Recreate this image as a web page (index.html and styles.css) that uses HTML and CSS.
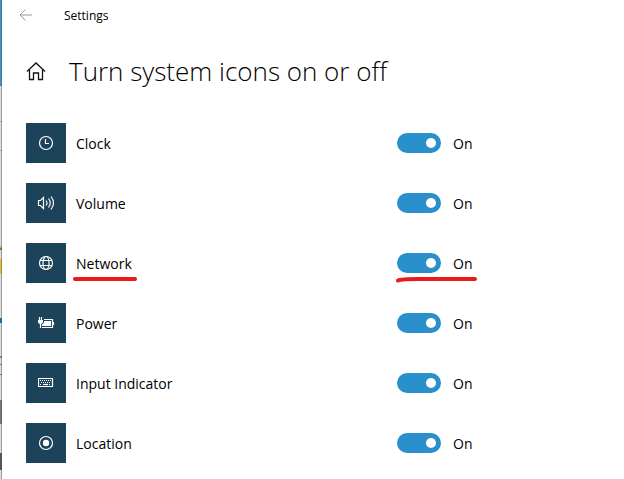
FILE: index.html
```html
<!DOCTYPE html>
<html lang="en">
<head>
    <meta charset="UTF-8">
    <meta name="viewport" content="width=device-width, initial-scale=1.0">
    <title>Settings</title>
    <link rel="stylesheet" href="styles.css">
</head>
<body>
    <div class="desktop-edge"></div>
    <div class="window">
        <header class="titlebar">
            <button class="back" type="button" aria-label="Back">
                <svg width="14" height="12" viewBox="0 0 14 12"><path d="M6.500 .5L1 6l5.500 5.500M1 6h12"/></svg>
            </button>
            <span class="titlebar-text">Settings</span>
        </header>
        <main class="content">
            <div class="heading">
                <button class="home" type="button" aria-label="Home">
                    <svg width="20" height="20" viewBox="0 0 20 20"><path d="M1 10.500L10 2l9 8.500M3.500 9v9.500h4v-6.500h5v6.500h4v-9.500"/></svg>
                </button>
                <h1>Turn system icons on or off</h1>
            </div>
            <ul class="icon-list">
                <li class="row">
                    <span class="tile">
                        <svg width="16" height="16" viewBox="0 0 16 16"><circle cx="8" cy="8" r="6.500"/><path d="M7.500 4v4.500h3.500"/></svg>
                    </span>
                    <label class="name" for="clock">Clock</label>
                    <span class="switch"><input type="checkbox" id="clock" checked><span>On</span></span>
                </li>
                <li class="row">
                    <span class="tile">
                        <svg width="18" height="16" viewBox="0 0 18 16"><path d="M1.500 5.500h2l3-3v11l-3-3h-2zM9 5.500q2 2.500 0 5M11.500 3.500q3.500 4.500 0 9M14 1.500q5 6.500 0 13"/></svg>
                    </span>
                    <label class="name" for="volume">Volume</label>
                    <span class="switch"><input type="checkbox" id="volume" checked><span>On</span></span>
                </li>
                <li class="row">
                    <span class="tile">
                        <svg width="16" height="16" viewBox="0 0 16 16"><circle cx="8" cy="8" r="6.500"/><ellipse cx="8" cy="8" rx="3" ry="6.500"/><path d="M2 5.500h12M2 10.500h12"/></svg>
                    </span>
                    <label class="name marked" for="network">Network
                        <svg class="mark" width="66" height="6" viewBox="0 0 66 6"><path d="M3 3h60"/></svg>
                    </label>
                    <span class="switch marked"><input type="checkbox" id="network" checked><span>On</span>
                        <svg class="mark" width="84" height="8" viewBox="0 0 84 8"><path d="M3 4.500Q6 3 24 3h56"/></svg>
                    </span>
                </li>
                <li class="row">
                    <span class="tile">
                        <svg width="18" height="16" viewBox="0 0 18 16"><path d="M2.500 2v3M4.500 2v3M1 5.500h5M3.500 8v5M7 4.500h8.500v8h-10.500M16.500 7v3"/><path class="solid" d="M1 6h5v1q0 2-2.500 2t-2.500-2zM7 6h7v5h-9v-1.500q2-1 2-2.500z"/></svg>
                    </span>
                    <label class="name" for="power">Power</label>
                    <span class="switch"><input type="checkbox" id="power" checked><span>On</span></span>
                </li>
                <li class="row">
                    <span class="tile">
                        <svg width="16" height="16" viewBox="0 0 16 16"><path d="M.5 3.500h14v8h-14z"/><path class="keys" d="M2 5.500h11M3 7.500h10M2 9.500h2M11 9.500h2"/><path d="M5 9.500h5"/></svg>
                    </span>
                    <label class="name" for="input">Input Indicator</label>
                    <span class="switch"><input type="checkbox" id="input" checked><span>On</span></span>
                </li>
                <li class="row">
                    <span class="tile">
                        <svg width="16" height="16" viewBox="0 0 16 16"><circle cx="8" cy="8" r="6.500"/><circle class="solid" cx="8" cy="8" r="3.200"/></svg>
                    </span>
                    <label class="name" for="location">Location</label>
                    <span class="switch"><input type="checkbox" id="location" checked><span>On</span></span>
                </li>
            </ul>
        </main>
    </div>
</body>
</html>
```
FILE: styles.css
```css
*{
    box-sizing: border-box;
}
body{
    margin: 0;
    min-height: 100vh;
    display: flex;
    background-color: #ffffff;
    color: #000000;
    font-family: "Open Sans", "Noto Sans", sans-serif;
    font-size: 14px;
    line-height: 20px;
}
/*strip of the desktop behind the window*/
.desktop-edge{
    width: 2px;
    border-right: 1px solid rgba(90, 90, 90, 0.5);
    background: linear-gradient(#3a94cc 0 85px, #777777 85px 86px, #dedede 86px 121px, #aaaaaa 121px 122px, #dedede 122px 150px, #aaaaaa 150px 151px, #dedede 151px 246px, #e0b440 246px 248px, #777777 248px 250px, #dedede 250px 259px, #e8bc3c 259px 274px, #dedede 274px 318px, #0870b8 318px 323px, #dedede 323px 356px, #888888 356px 358px, #dedede 358px 364px, #777799 364px 365px, #dedede 365px 374px, #777799 374px 375px, #dedede 375px 400px, #777777 400px 424px, #dedede 424px 453px, #555555 453px 470px, #dedede 470px);
}
.window{
    flex: 1;
}
button{
    display: flex;
    padding: 0;
    border: 0;
    background: none;
}
svg{
    display: block;
    fill: none;
    stroke: currentColor;
}
.titlebar{
    display: flex;
    align-items: center;
    height: 32px;
    padding-left: 17px;
    font-size: 12px;
}
.back{
    width: 45px;
    color: #999999;
    padding-bottom: 2px;
}
.content{
    padding: 19px 24px 16px;
}
.heading{
    display: flex;
    align-items: center;
    margin-bottom: 32px;
}
.home{
    width: 43px;
    color: #111111;
}
.home svg{
    stroke-width: 1.300;
}
h1{
    margin: 0;
    font-size: 26px;
    font-weight: 300;
    line-height: 40px;
}
.icon-list{
    display: grid;
    gap: 20px;
    margin: 0;
    padding: 0;
    list-style: none;
}
.row{
    display: grid;
    grid-template-columns: 40px minmax(0, 311px) auto;
    column-gap: 10px;
    align-items: center;
}
.tile{
    display: flex;
    align-items: center;
    justify-content: center;
    height: 40px;
    background-color: #1c4359;
    color: #ffffff;
}
.tile svg{
    stroke-width: 1.200;
}
.tile .solid{
    fill: currentColor;
    stroke: none;
}
.keys{
    stroke-dasharray: 1 1;
}
.name,.switch{
    justify-self: start;
}
.name,.switch span{
    padding-top: 2px;
}
.switch{
    display: flex;
    align-items: center;
    gap: 12px;
}
.switch input{
    appearance: none;
    display: flex;
    align-items: center;
    justify-content: flex-end;
    width: 44px;
    height: 20px;
    margin: 0;
    padding: 0 5px;
    border-radius: 10px;
    background-color: #2990cc;
}
.switch input::before{
    content: '';
    width: 10px;
    height: 10px;
    border-radius: 50%;
    background-color: #ffffff;
}
.switch input:not(:checked){
    justify-content: flex-start;
    background-color: #999999;
}
/*red pen line under an item*/
.marked{
    position: relative;
}
.mark{
    position: absolute;
    left: -4px;
    top: 24px;
    color: #e81c1c;
    stroke-width: 4;
    stroke-linecap: round;
}
.switch .mark{
    left: -2px;
}
```
